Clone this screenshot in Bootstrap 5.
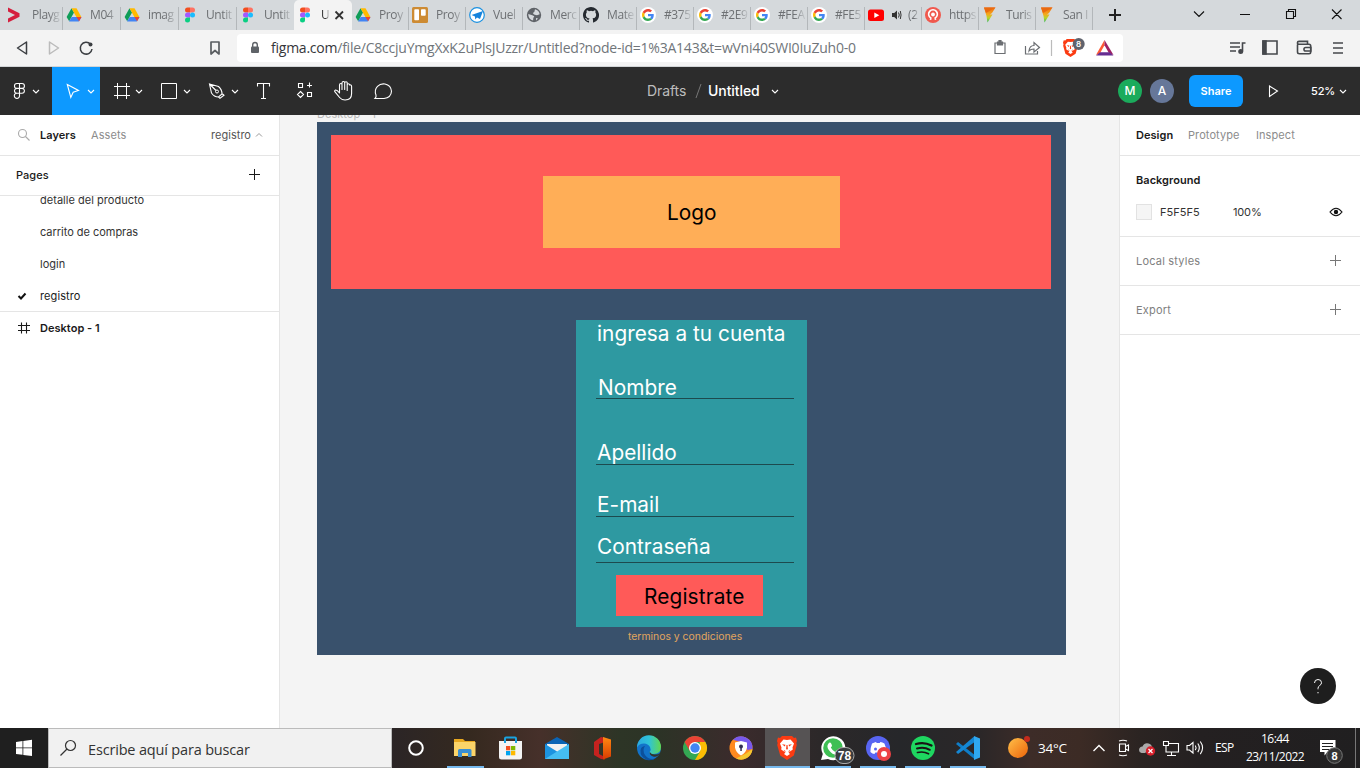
<!DOCTYPE html>
<html lang="es">
<head>
<meta charset="utf-8">
<meta name="viewport" content="width=device-width, initial-scale=1">
<title>Untitled – Figma</title>
<link href="https://cdn.jsdelivr.net/npm/bootstrap@5.3.0/dist/css/bootstrap.min.css" rel="stylesheet">
<style>
  :root { --ui: Inter, "Liberation Sans", sans-serif; --win: "Open Sans", "Noto Sans", sans-serif; }
  body { width: 1360px; height: 768px; overflow: hidden; font-family: var(--ui); font-size: 11px; line-height: 16px; letter-spacing: .03px; color: #333; background: #fff; }
  svg { display: block; flex: none; }
  .ln { fill: none; stroke: currentColor; }
  /* browser */
  .tabstrip { height: 30px; background: #d5d9dc; padding-left: 5px; font-family: var(--win); font-size: 12px; letter-spacing: -.4px; color: #6d7073; }
  .tab { width: 57px; height: 30px; padding: 0 3px; position: relative; flex: none; }
  .tab.wide { width: 58px; }
  .tab::after { content: ""; position: absolute; right: 0; top: 7px; height: 23px; width: 1px; background: #b3b7ba; }
  .tab.plain::after { display: none; }
  .tab.current { background: #f3f3f3; border-radius: 5px 5px 0 0; color: #333; }
  .tab-title { margin-left: 8px; width: 29px; white-space: nowrap; -webkit-mask-image: linear-gradient(90deg, #000 60%, rgba(0,0,0,.15)); mask-image: linear-gradient(90deg, #000 60%, rgba(0,0,0,.15)); }
  .addressbar { height: 37px; background: #f3f3f3; border-bottom: 1px solid #d2d5d7; }
  .urlbox { width: 886px; height: 28px; margin-top: 4px; background: #fff; border-radius: 4px; }
  .url { font-family: var(--win); font-size: 14px; line-height: 20px; letter-spacing: -.235px; color: #70757a; width: 709px; white-space: nowrap; }
  .url b { font-weight: 400; color: #35363a; }
  /* figma */
  .toolbar { height: 48px; background: #2c2c2c; color: #fff; }
  .tool-active { background: #0d99ff; }
  .doc { font-size: 14px; letter-spacing: -.08px; }
  .avatar { width: 24px; height: 24px; border-radius: 50%; font-size: 12px; font-weight: 500; }
  .share { width: 54px; height: 32px; border-radius: 6px; background: #0d99ff; color: #fff; font-size: 11px; font-weight: 600; padding: 0; border: 0; }
  .workspace { height: 613px; }
  .leftpanel { width: 280px; border-right: 1px solid #e5e5e5; }
  .rightpanel { width: 241px; border-left: 1px solid #e5e5e5; }
  .rule { border-bottom: 1px solid #e5e5e5; }
  .muted { color: #8c8c8c; letter-spacing: .08px; }
  .idle { color: #808080; letter-spacing: .2px; }
  .strong { font-weight: 600; color: #1a1a1a; }
  .pagelist { height: 116px; overflow: hidden; }
  .pagelist > div { height: 32px; }
  .pagelist > div:first-child { margin-top: -12px; }
  .swatch { width: 16px; height: 16px; background: #f5f5f5; border: 1px solid #e2e2e2; }
  .canvas { background: #f4f4f4; position: relative; overflow: hidden; }
  .canvas .node { position: absolute; white-space: nowrap; }
  .canvas .t { font-size: 20.8px; line-height: 25px; letter-spacing: .03px; color: #fff; }
  .help { position: absolute; left: 1300px; top: 668px; width: 36px; height: 36px; }
  /* windows taskbar */
  .taskbar { height: 40px; color: #fff; font-family: var(--win); background: linear-gradient(90deg, #222 0, #222 385px, #2b2526 392px, #35291f 470px, #46302a 540px, #2d3526 620px, #2c3326 660px, #3b2b2c 735px, #2c2829 820px, #26272a 900px, #2b2728 980px, #3d2c28 1030px, #3c2b25 1080px, #2b2422 1140px, #242021 1200px, #201f20 1360px); }
  .startbtn { background: #1f1f1f; }
  .searchbox { width: 344px; height: 40px; background: #f1f1f1; border: 1px solid #bbb; color: #333; font-size: 14.500px; letter-spacing: -.17px; }
  .clock { font-size: 12px; line-height: 18px; width: 62px; margin-right: 14px; letter-spacing: -.55px; }
</style>
</head>
<body>
<svg width="0" height="0" class="position-absolute">
  <defs>
    <linearGradient id="gf" x1="0" y1="0" x2="0" y2="1"><stop offset="0" stop-color="#f06a10"/><stop offset=".45" stop-color="#f5a81c"/><stop offset=".7" stop-color="#b9d52a"/><stop offset="1" stop-color="#25b35a"/></linearGradient>
  </defs>
  <symbol id="drive" viewBox="0 0 16 16"><path fill="#0f9d58" d="M5.5 1.2 8 5.6 3.2 14.3.6 10z"/><path fill="#ffba00" d="M5.5 1.2h5L15.4 10h-5z"/><path fill="#4285f4" d="M5.7 10h9.8l-2.7 4.5H3z"/><path fill="#ea4335" d="M10.4 10h5.1l-2.4 4.3z"/></symbol>
  <symbol id="figma" viewBox="0 0 16 16"><path fill="#f24e1e" d="M5.500 .5H8v5H5.500a2.500 2.500 0 0 1 0-5z"/><path fill="#ff7262" d="M8 .5h2.500a2.500 2.500 0 0 1 0 5H8z"/><path fill="#a259ff" d="M5.500 5.500H8v5H5.500a2.500 2.500 0 0 1 0-5z"/><circle cx="10.500" cy="8" r="2.500" fill="#1abcfe"/><path fill="#0acf83" d="M5.500 10.500H8V13a2.500 2.500 0 1 1-2.500-2.500z"/></symbol>
  <symbol id="google" viewBox="0 0 16 16"><circle cx="8" cy="8" r="8" fill="#fff"/><g transform="translate(2 2) scale(.25)"><path fill="#ea4335" d="M24 9.500c3.540 0 6.710 1.220 9.210 3.600l6.850-6.850C35.900 2.380 30.470 0 24 0 14.620 0 6.510 5.380 2.560 13.220l7.980 6.190C12.430 13.720 17.740 9.500 24 9.500z"/><path fill="#4285f4" d="M46.980 24.550c0-1.570-.15-3.090-.38-4.550H24v9.020h12.940c-.58 2.960-2.260 5.480-4.780 7.180l7.730 6c4.510-4.180 7.090-10.360 7.090-17.650z"/><path fill="#fbbc05" d="M10.530 28.590A14.500 14.500 0 0 1 9.770 24c0-1.600.27-3.140.76-4.590l-7.980-6.190A24 24 0 0 0 0 24c0 3.880.92 7.540 2.560 10.780z"/><path fill="#34a853" d="M24 48c6.480 0 11.930-2.130 15.890-5.810l-7.730-6c-2.150 1.450-4.920 2.300-8.160 2.300-6.260 0-11.570-4.220-13.470-9.910l-7.980 6.190C6.510 42.620 14.620 48 24 48z"/></g></symbol>
  <symbol id="fly" viewBox="0 0 16 16"><path fill="url(#gf)" d="M2 .5h11.500L10 6 8 7.500h2.500L5.500 15.500 4.500 9z"/><path fill="#ea6a10" d="M2 .5h11.500L4 6z"/></symbol>
  <symbol id="lion" viewBox="0 0 20 24"><path fill="#fb3b12" d="M5 0h10l2 2 2-.4 1 3.400-.7 2 .5 2-3 10.500L10 24l-6.800-4.500L.2 9l.5-2L0 5l1-3.400L3 2z"/><path fill="#fff" d="M6.500 3.500 10 4l3.500-.5 3.500 4-1.500 4 .3 2-4.300 3 1.500 1.500L10 20l-3-2 1.500-1.500-4.300-3 .3-2-1.500-4z"/><path fill="#fb3b12" d="m5 8.300 3.500.5-.7 1.700zM15 8.300l-3.500.5.7 1.700zM9.500 9h1l.4 4-.9.700-.9-.7zM6.500 13.800l2.500 1.500-1.300.5zM13.500 13.800 11 15.300l1.300.5z"/></symbol>
</svg>

<header>
  <div class="tabstrip d-flex">
    <div class="tab wide d-flex align-items-center"><svg width="16" height="16"><path d="M0 .5 11.500 6.200v3.600L0 15.500v-4L7 8 0 4.500z" fill="#d51f3e"/></svg><span class="tab-title">Playg</span></div>
    <div class="tab wide d-flex align-items-center"><svg width="16" height="16"><use href="#drive"/></svg><span class="tab-title">M04</span></div>
    <div class="tab wide d-flex align-items-center"><svg width="16" height="16"><use href="#drive"/></svg><span class="tab-title">imag</span></div>
    <div class="tab wide d-flex align-items-center"><svg width="16" height="16"><use href="#figma"/></svg><span class="tab-title">Untit</span></div>
    <div class="tab plain d-flex align-items-center"><svg width="16" height="16"><use href="#figma"/></svg><span class="tab-title">Untit</span></div>
    <div class="tab wide plain current d-flex align-items-center"><svg width="16" height="16"><use href="#figma"/></svg><span class="tab-title" style="width:8px">U</span><svg width="14" height="14" viewBox="0 0 14 14" style="margin-left:3px"><path class="ln" stroke-width="1.800" d="m3.500 3.500 7.500 7.500M11 3.500 3.500 11"/></svg></div>
    <div class="tab d-flex align-items-center"><svg width="16" height="16"><use href="#drive"/></svg><span class="tab-title">Proy</span></div>
    <div class="tab d-flex align-items-center"><svg width="16" height="16"><rect width="16" height="16" rx="1.500" fill="#cd8b33"/><rect x="2.300" y="2.300" width="4.700" height="11" rx=".8" fill="#fff"/><rect x="9" y="2.300" width="4.700" height="6.500" rx=".8" fill="#fff"/></svg><span class="tab-title">Proy</span></div>
    <div class="tab d-flex align-items-center"><svg width="16" height="16"><circle cx="8" cy="8" r="7.300" fill="#fff" stroke="#1a90e0" stroke-width="1.200"/><path fill="#1583dc" d="M2.500 8 14 4l-3 8-3-1.500-1.800 2L6 9.500z"/></svg><span class="tab-title">Vuel</span></div>
    <div class="tab d-flex align-items-center"><svg width="16" height="16"><circle cx="8" cy="8" r="7.200" fill="#5f6368"/><path fill="#d5d9dc" d="M9 2.300a6 6 0 0 1 4.700 5L11 8.200 8 7.500 6.800 6l1.500-1zM2.300 7l4 1.300 2 1-1 1.700-.2 2.500A6 6 0 0 1 2.300 7zM10 11l2 .5-2 2z"/></svg><span class="tab-title">Merc</span></div>
    <div class="tab d-flex align-items-center"><svg width="16" height="16"><path fill="#24292f" d="M8 0C3.580 0 0 3.580 0 8c0 3.540 2.290 6.530 5.470 7.590.4.070.55-.17.55-.38v-1.490c-2.010.37-2.530-.49-2.690-.94-.09-.23-.48-.94-.82-1.130-.28-.15-.68-.52-.01-.53.63-.01 1.080.58 1.230.82.72 1.210 1.870.87 2.330.66.070-.52.28-.87.510-1.070-1.780-.2-3.640-.89-3.640-3.950 0-.87.31-1.590.82-2.150-.08-.2-.36-1.020.08-2.120 0 0 .67-.21 2.200.82a7.600 7.600 0 0 1 4 0c1.530-1.040 2.200-.82 2.200-.82.44 1.100.16 1.920.08 2.120.51.56.82 1.270.82 2.150 0 3.070-1.870 3.750-3.650 3.950.29.25.54.73.54 1.480v2.200c0 .21.15.46.55.38A8 8 0 0 0 8 0z"/></svg><span class="tab-title">Mate</span></div>
    <div class="tab d-flex align-items-center"><svg width="16" height="16"><use href="#google"/></svg><span class="tab-title">#375</span></div>
    <div class="tab d-flex align-items-center"><svg width="16" height="16"><use href="#google"/></svg><span class="tab-title">#2E9</span></div>
    <div class="tab d-flex align-items-center"><svg width="16" height="16"><use href="#google"/></svg><span class="tab-title">#FEA</span></div>
    <div class="tab d-flex align-items-center"><svg width="16" height="16"><use href="#google"/></svg><span class="tab-title">#FE5</span></div>
    <div class="tab d-flex align-items-center"><svg width="16" height="16"><rect y="2.500" width="16" height="11.500" rx="2.500" fill="#f00"/><path fill="#fff" d="m6.300 5.500 5 2.700-5 2.700z"/></svg><svg width="12" height="12" style="margin-left:7px"><path fill="#333" d="M1 4h2.200L6 1.500v9L3.200 8H1z"/><path fill="none" stroke="#333" d="M7.500 3.500q1.500 2.500 0 5M9.300 2q1.500 4 0 8"/></svg><span class="tab-title" style="margin-left:5px;width:10px">(2</span></div>
    <div class="tab d-flex align-items-center"><svg width="16" height="16"><circle cx="8" cy="8" r="8" fill="#f0594e"/><path fill="none" stroke="#fff" stroke-width="1.600" d="M5.500 12.800 5.800 11a4.400 4.400 0 1 1 4.400 0l.3 1.800"/><circle cx="8" cy="7.500" r="1.900" fill="#fff"/></svg><span class="tab-title">https</span></div>
    <div class="tab d-flex align-items-center"><svg width="16" height="16"><use href="#fly"/></svg><span class="tab-title">Turis</span></div>
    <div class="tab d-flex align-items-center"><svg width="16" height="16"><use href="#fly"/></svg><span class="tab-title">San I</span></div>
    <svg width="267" height="30" viewBox="1093 0 267 30"><path fill="none" stroke="#222" stroke-width="2" d="M1109 15h12M1115 9v12"/><g fill="none" stroke="#111" stroke-width="1.100"><path d="m1194 11.500 5 5 5-5M1240 14.500h10M1286.500 11.500h7v7h-7zM1288.500 11v-1.500h7v7H1294M1332 9.500l9.500 9.500M1341.500 9.500 1332 19"/></g></svg>
  </div>
  <div class="addressbar d-flex">
    <svg width="237" height="36" viewBox="0 30 237 36"><g fill="none" stroke="#3b3e42" stroke-width="1.500" stroke-linejoin="round"><path d="m17.500 48 9-6v12z"/><path stroke="#bbb" d="m58.500 48-9-6v12z"/><path d="M90.500 44.200A5.900 5.900 0 1 0 92 49"/><path stroke="#5a5d61" stroke-width="1.700" d="M211 42h8v12l-4-3.500-4 3.500z"/></g><circle cx="90.500" cy="44.500" r="2" fill="#3b3e42"/></svg>
    <div class="urlbox d-flex align-items-center">
      <svg width="34" height="28" viewBox="237 34 34 28"><rect x="251" y="46.500" width="8" height="6.500" rx="1" fill="#5f6368"/><path fill="none" stroke="#5f6368" stroke-width="1.400" d="M252.700 47v-2.200a2.300 2.300 0 0 1 4.600 0V47"/></svg>
      <div class="url"><b>figma.com</b>/file/C8ccjuYmgXxK2uPlsJUzzr/Untitled?node-id=1%3A143&amp;t=wVni40SWI0IuZuh0-0</div>
      <svg width="143" height="28" viewBox="980 34 143 28"><g fill="none" stroke="#6b6e72" stroke-width="1.200"><path d="M995 43h10v10.500h-10z"/><path fill="#6b6e72" d="M997.500 42h5v3h-5zM999 40.500h2V42h-2z"/><path d="M1026 46.500h-.5v7.500h12v-3M1029 51q.5-5.500 5-5.500v-3l5.500 5-5.500 4.500v-3q-3.500 0-5 2z"/><path stroke="#bbb" d="M1051.500 40v16"/></g><use href="#lion" x="1063" y="39" width="15" height="18"/><circle cx="1078.700" cy="44" r="6" fill="#60636d"/><text x="1078.700" y="47" text-anchor="middle" font-size="8" font-weight="600" fill="#fff">8</text><path fill="#ff5a35" d="M1104.500 40 1096 55l4-1.700 4.500-8z"/><path fill="#9e2063" d="m1104.500 40 9 15-4.500-1.700-4.500-8z"/><path fill="#662d91" d="M1096 55.500h17.500l-4-3.200h-9.500z"/></svg>
    </div>
    <svg width="237" height="36" viewBox="1123 30 237 36"><g fill="none" stroke="#45484c" stroke-width="1.600"><path d="M1230 43h10M1230 47h10M1230 51h6M1242.500 51.500V43h3"/><circle cx="1240.700" cy="51.500" r="1.700" fill="#45484c"/><path d="M1263 41h14v13h-14z"/><path fill="#45484c" d="M1263 41h3v13h-3z"/><path d="M1297.500 44.500v7.500q0 1.700 2 1.700h9.500q1.700 0 1.700-1.700v-6q0-1.700-1.700-1.700h-10q-1.800 0-1.500-1.700 0-1.200 1.500-1.200h8.500v2.500M1311 47.500h-5.300a1.700 1.700 0 0 0 0 3.500h5.300z"/><path d="M1333 43h10M1333 48h10M1333 53h10"/></g></svg>
  </div>
</header>

<nav class="toolbar d-flex align-items-center">
  <svg width="52" height="48" viewBox="0 67 52 48"><g fill="none" stroke="#fff" stroke-width="1.100"><path d="M19.500 83.500v12.200a2.600 2.600 0 1 1-2.600-2.500h5.100a2.400 2.400 0 0 0 0-4.800h-5.100a2.400 2.400 0 0 0 0 4.800M16.900 88.400a2.450 2.450 0 0 1 0-4.900H22a2.450 2.450 0 0 1 0 4.900"/><path d="m33 90 3 3 3-3"/></g></svg>
  <svg class="tool-active" width="48" height="48" viewBox="52 67 48 48"><g fill="none" stroke="#fff" stroke-width="1.100"><path d="m67.300 84.500 11.200 6-5.300 1.800-2.400 5.200z"/><path d="m88 90 3 3 3-3"/></g></svg>
  <svg width="144" height="48" viewBox="100 67 144 48"><g fill="none" stroke="#fff"><path d="M117.500 83v16M126.500 83v16M114 86.500h16M114 95.500h16M161.500 83.500h15v15h-15z"/><path stroke-width="1.100" d="m136 90 3 3 3-3M184 90l3 3 3-3M232 90l3 3 3-3M209.500 84l9 2.500q3.500 3 3.500 7.500l-3.500 3q-4.500 0-7-4zM209.500 84l6.500 6.500M222.500 94l1.500 1.300-4 3-1.500-1.300"/><circle cx="217" cy="91.500" r="1.500"/></g></svg>
  <svg width="160" height="48" viewBox="244 67 160 48"><g fill="none" stroke="#fff" stroke-width="1.100"><path d="M257.500 86.500v-3h12v3M263.500 83.500v15M261 98.500h5M298.500 83.500h4v4h-4zM307.500 92.500h4v4h-4zM309.500 82.500v5M307 85.500h5M300.500 91.500l3 3-3 3-3-3z"/><path stroke-linejoin="round" d="M339.500 93v-8q0-1.500 1.300-1.500t1.200 1.500v4.500V83q0-1.500 1.400-1.500t1.300 1.500v6.500V83q0-1.300 1.300-1.300t1.200 1.300v7.500V85q0-1.300 1.200-1.300t1.200 1.300q2-.5 2 1.500v7q0 6.500-6.500 6.500-3.500 0-5.500-2.500l-4.800-5.800q-.5-1.200.7-1.700 1.500-.3 4 3z"/><path d="M375 98.500q1.500-1.500 1-3.500-2-5 1.500-8.700 3-3 7.500-2.300 6 1.300 6.500 7.200-.4 6.500-7.500 7.300z"/></g></svg>
  <div class="doc d-flex align-items-center" style="margin-left:243px"><span style="width:41px;color:#bdbdbd">Drafts</span><svg width="20" height="20"><path stroke="#777" d="m13 3-5 14"/></svg><span style="width:56px;font-weight:500">Untitled</span><svg width="16" height="16" class="ms-1"><path class="ln" stroke-width="1.100" d="m3 7 3 3 3-3" transform="translate(1)"/></svg></div>
  <div class="ms-auto d-flex align-items-center" style="width:242px"><span class="avatar d-flex align-items-center justify-content-center" style="background:#1bab5c">M</span><span class="avatar d-flex align-items-center justify-content-center ms-2" style="background:#667799">A</span><button class="share btn" style="margin-left:15px">Share</button><svg width="68" height="48" viewBox="1243 67 68 48"><path class="ln" stroke-width="1.100" d="m1269.500 86 8 5-8 5.500z"/></svg><span style="font-weight:500;letter-spacing:-.15px">52%</span><svg width="14" height="14" class="ms-1"><path class="ln" stroke-width="1.100" d="m1 6 3 3 3-3"/></svg></div>
</nav>

<main class="workspace d-flex">
  <aside class="leftpanel flex-shrink-0">
    <div class="rule d-flex align-items-center" style="height:41px"><svg width="40" height="40" viewBox="0 115 40 40"><g fill="none" stroke="#aaa" stroke-width="1.100"><circle cx="22.500" cy="133.500" r="4"/><path d="m25.500 136.500 4 4"/></g></svg><span class="strong" style="width:51px">Layers</span><span class="muted">Assets</span><span class="ms-auto" style="color:#555">registro</span><svg width="28" height="16"><path fill="none" stroke="#999" d="m5 9.500 3-3 3 3"/></svg></div>
    <div class="rule d-flex align-items-center justify-content-between px-3" style="height:40px;padding-bottom:1px"><span style="font-weight:500;color:#1a1a1a">Pages</span><svg width="17" height="16"><path stroke="#1a1a1a" d="M3 7.500h11M8.500 2v11"/></svg></div>
    <div class="pagelist rule">
      <div class="d-flex align-items-center" style="padding-left:40px">detalle del producto</div>
      <div class="d-flex align-items-center" style="padding-left:40px;letter-spacing:-.03px">carrito de compras</div>
      <div class="d-flex align-items-center" style="padding-left:40px">login</div>
      <div class="d-flex align-items-center" style="color:#1a1a1a;letter-spacing:.1px"><svg width="40" height="16"><path fill="none" stroke="#111" stroke-width="2" d="m18.500 8 2.500 2.500 4.500-5"/></svg>registro</div>
    </div>
    <div class="d-flex align-items-center strong" style="height:32px"><svg width="40" height="16"><path class="ln" stroke-width="1.100" d="M21.500 2.500v11M26.500 2.500v11M18 5.500h12M18 10.500h12"/></svg>Desktop - 1</div>
  </aside>
  <section class="canvas flex-grow-1">
    <div class="node" style="left:37px;top:-9px;color:#b8b8b8">Desktop - 1</div>
    <div class="node" style="left:37px;top:7px;width:749px;height:533px;background:#39516c">
      <div class="node" style="left:14px;top:13px;width:720px;height:154px;background:#ff5a58"></div>
      <div class="node" style="left:226px;top:54px;width:297px;height:72px;background:#ffae57"></div>
      <div class="node t" style="left:350px;top:78px;color:#000">Logo</div>
      <div class="node" style="left:259px;top:198px;width:231px;height:307px;background:#2e99a1"></div>
      <div class="node t" style="left:280px;top:199px">ingresa a tu cuenta</div>
      <div class="node t" style="left:281px;top:253px">Nombre</div>
      <div class="node t" style="left:280px;top:318px">Apellido</div>
      <div class="node t" style="left:280px;top:370px">E-mail</div>
      <div class="node t" style="left:280px;top:412px">Contraseña</div>
      <svg class="node" style="left:279px;top:270px" width="198" height="175"><path stroke="#1d4a4e" d="M0 6.500h198M0 72.500h198M0 124.500h198M0 170.500h198"/></svg>
      <div class="node" style="left:299px;top:453px;width:147px;height:41px;background:#ff5a58"></div>
      <div class="node t" style="left:327px;top:462px;color:#000;letter-spacing:.15px">Registrate</div>
      <div class="node" style="left:311px;top:507px;font-size:10.400px;letter-spacing:0;color:#e2a55e">terminos y condiciones</div>
    </div>
  </section>
  <aside class="rightpanel flex-shrink-0">
    <div class="rule d-flex align-items-center px-3" style="height:41px"><span class="strong" style="width:52px">Design</span><span class="muted" style="width:68px">Prototype</span><span class="muted">Inspect</span></div>
    <div class="rule px-3" style="height:81px;padding-top:16px"><div class="strong">Background</div><div class="d-flex align-items-center" style="margin-top:16px"><span class="swatch"></span><span style="margin-left:8px;width:73px">F5F5F5</span><span style="letter-spacing:-.15px">100%</span><svg width="16" height="16" class="ms-auto"><path fill="none" stroke="#111" stroke-width="1.200" d="M2 8q6-7.500 12 0-6 7.500-12 0z"/><circle cx="8" cy="8" r="2.200" fill="#111"/></svg></div></div>
    <div class="rule d-flex align-items-center justify-content-between px-3 idle" style="height:49px"><span>Local styles</span><svg width="16" height="16"><path stroke="#777" d="M2 7.500h11M7.500 2v11"/></svg></div>
    <div class="rule d-flex align-items-center justify-content-between px-3 idle" style="height:49px"><span>Export</span><svg width="16" height="16"><path stroke="#777" d="M2 7.500h11M7.500 2v11"/></svg></div>
  </aside>
</main>
<svg class="help" viewBox="0 0 36 36"><circle cx="18" cy="18" r="18" fill="#1e1e1e"/><path fill="none" stroke="#fff" d="M14.500 15q0-3.500 3.500-3.500t3.500 3.200q0 1.800-1.800 2.800-1.700 1-1.700 3v.8M18 24v1.300"/></svg>

<footer class="taskbar d-flex align-items-center">
  <svg class="startbtn" width="48" height="40" viewBox="0 728 48 40"><path fill="#fff" d="m16 742 6.500-.9v6.400H16zM23.300 741l8.700-1.200v7.700h-8.700zM16 748.300h6.500v6.500l-6.500-.9zM23.300 748.300H32v7.700l-8.700-1.100z"/></svg>
  <div class="searchbox d-flex align-items-center"><svg width="39" height="38" viewBox="49 729 39 38"><g fill="none" stroke="#333" stroke-width="1.200"><circle cx="70.500" cy="745.500" r="5"/><path d="m67 749-6.500 6.500"/></g></svg><span class="pt-1">Escribe aquí para buscar</span></div>
  <svg width="608" height="40" viewBox="392 728 608 40">
    <defs>
      <linearGradient id="e1" x1="0" x2="1"><stop stop-color="#2aa9e0"/><stop offset=".5" stop-color="#2fc3d8"/><stop offset="1" stop-color="#62d84e"/></linearGradient>
      <linearGradient id="o1" x1="0" y1="0" x2="0" y2="1"><stop stop-color="#ff8a12"/><stop offset="1" stop-color="#d83b01"/></linearGradient>
    </defs>
    <rect x="765" y="728" width="45" height="40" fill="#565354"/>
    <path fill="#76b9ed" d="M447 766h37v2h-37zM765 766h45v2h-45zM815 766h36v2h-36zM860 766h36v2h-36zM905 766h36v2h-36zM950 766h36v2h-36z"/>
    <circle cx="416" cy="748" r="6.800" fill="none" stroke="#fff" stroke-width="2"/>
    <path fill="#e8a820" d="M454 739h9l2 2h10v5h-21z"/><rect x="454" y="742" width="21.500" height="14" fill="#fbd469"/><path fill="#3a8fd2" d="M458 757v-6.500q0-1.500 1.500-1.500h10.500q1.500 0 1.500 1.500v6.500h-3.500v-4h-6v4z"/>
    <path fill="none" stroke="#1aa3e0" stroke-width="2" d="M505 743v-4.500q0-1 1-1h9q1 0 1 1v4.500"/><path fill="#f4f4f4" d="M499 741h23v16q0 2.500-2.500 2.500h-18q-2.500 0-2.500-2.500z"/><path fill="none" stroke="#1aa3e0" stroke-width="2" d="M505 743v-2.500M516 743v-2.500"/><path fill="#f25022" d="M506 746h4.300v4.300H506z"/><path fill="#7fba00" d="M511 746h4.300v4.300H511z"/><path fill="#00a4ef" d="M506 751h4.300v4.300H506z"/><path fill="#ffb900" d="M511 751h4.300v4.300H511z"/>
    <path fill="#0b64b5" d="m545 744 12-7 12 7v5h-24z"/><path fill="#f1f1f1" d="M547 744h20v8h-20z"/><path fill="#1c93e0" d="m545 744 12 7.500v7.500h-12z"/><path fill="#45bdf3" d="m569 744-12 7.500-12 7.500h24z"/>
    <path fill="#c5221f" d="m594 742 7-5 4 1v4l-6 2v10l6 3v2.500l-4-.5-7-4z"/><path fill="url(#o1)" d="m603 737 8 2.500v17l-8 3z"/>
    <circle cx="649" cy="748" r="12" fill="#1273c9"/><path fill="#0c509c" d="M645 746q-3 4 0 9 4 5.500 11 3.200a12 12 0 0 1-9 1.700q-7-3-6.500-9.500.5-4 4.500-4.400z"/><path fill="url(#e1)" d="M637 747.500a12 12 0 0 1 24-.5q0 7-7.500 7-4.500 0-4-2 2-2.500.5-5-2-3.500-6-3.500-5 0-7 4z"/><path fill="#333528" d="M649.700 751.500q1 3 5 3 3.500 0 5.500-1.500-2.500 4.500-7 3.500-4-1-3.500-5z"/>
    <circle cx="695" cy="748" r="12" fill="#34a853"/><path fill="#ea4335" d="M684.600 742A12 12 0 0 1 705.400 742H695l-5.200 9z"/><path fill="#fbbc04" d="M705.400 742A12 12 0 0 1 695 760l5.200-9-.5-9z"/><circle cx="695" cy="748" r="6" fill="#fff"/><circle cx="695" cy="748" r="4.700" fill="#4285f4"/>
    <circle cx="741" cy="748" r="11.500" fill="#ff8a20"/><path fill="#7759ed" d="M733 739.800a11.500 11.500 0 0 1 19.500 9.200l-5 1-4-7z"/><path fill="#f5c730" d="M752.500 749A11.500 11.500 0 0 1 736 758.500l10-5z"/><path fill="#fff" d="m735 742.500 6-1.500 6 1.500v5q-1 5.500-6 8-5-2.500-6-8z"/><circle cx="741" cy="746.500" r="2" fill="#332f55"/><path fill="#332f55" d="M740.300 747h1.500v4h-1.500z"/>
    <use href="#lion" x="777" y="736" width="20" height="24"/>
    <path fill="#fff" d="M821 760l1.800-6A12 12 0 1 1 828 759z"/><circle cx="833" cy="748" r="9.800" fill="#3fbf54"/><path fill="#fff" d="M828.500 743.500q1.500-2 2.700 0l.8 2q0 1-1.200 2 1.500 3 4.500 4.500 1.200-2 2-1.600l2.500 1.300q.7 3-3 3.300-4.500-.2-8-5-2.600-3.800-.3-6.500z"/><rect x="835" y="747.500" width="19" height="16" rx="8" fill="#3a3d3f" stroke="#aaa"/><text x="844.500" y="759.500" text-anchor="middle" font-family="Liberation Sans" font-weight="700" font-size="12" fill="#fff">78</text>
    <circle cx="878" cy="748" r="12" fill="#5865f2"/><path fill="#fff" d="M872 743.500q3-1.500 4-1.500l.7 1h3l.7-1q2 .2 4 1.500 2 4 2 8.500-2 2-4 2l-1-1.500h-6l-1 1.500q-2 0-4-2 0-4.500 1.600-8.500z"/><circle cx="875.500" cy="749" r="1.500" fill="#5865f2"/><circle cx="884" cy="754" r="7" fill="#ed4245"/><circle cx="884" cy="754" r="3" fill="#fff"/>
    <circle cx="923" cy="748" r="12" fill="#1ed760"/><g fill="none" stroke="#191414" stroke-linecap="round"><path stroke-width="2.300" d="M916 744q8-2.500 15.500 1.500"/><path stroke-width="2" d="M917 748.500q7-2 12.800 1.300"/><path stroke-width="1.700" d="M917.500 752.500q6-1.500 11 1.300"/></g>
    <path fill="#0f7dc7" d="m956 744 2-2 18 14-1 3.500z"/><path fill="#1487d4" d="m956 752 2 2 18-13-2-4.500z"/><path fill="#2fa8f0" d="m974 736 6 2.500v19l-6 2.500z"/>
  </svg>
  <svg width="38" height="40" viewBox="1000 728 38 40"><defs><linearGradient id="su" x1="0" y1="0" x2="1" y2="1"><stop stop-color="#ffc04a"/><stop offset="1" stop-color="#ec6309"/></linearGradient></defs><circle cx="1018" cy="748" r="10" fill="url(#su)"/><circle cx="1027" cy="739" r="3" fill="#c42b1c"/></svg>
  <span style="width:49px;font-size:13.500px;letter-spacing:-.2px">34°C</span>
  <svg width="128" height="40" viewBox="1087 728 128 40"><g fill="none" stroke="#fff" stroke-width="1.100"><path stroke-width="1.400" d="m1093.500 751 5.500-5.500 5.500 5.500"/><path d="M1119.500 744h6v7.500h-6zM1125.500 746.500l3-1.500v5.500l-3-1.500M1119 741q4-1.500 8 0M1119 755q4 1.500 8 0"/><path d="M1168 743.500h10.500v8.500h-12.500v-4M1171.500 752v3M1167 755.500h9M1163.500 741.500h5v4h-5zM1166 745.500v4"/><path d="M1187 745.500h2.500l3.500-3v10.500l-3.500-3h-2.500zM1195.300 745.500q1.500 2.300 0 4.600M1197.800 743.500q3 4.300 0 8.600M1200.300 741.500q4.500 6.300 0 12.600"/></g><path fill="#aaa" d="M1139 750q.3-3.500 3.500-3.500 2-4 6-3 3 .5 3.500 3.500l-7 6h-3.500q-2.500-.5-2.500-3z"/><circle cx="1150.500" cy="751" r="4.700" fill="#d71f2b"/><path stroke="#fff" stroke-width="1.200" d="m1148.500 749 4 4M1152.500 749l-4 4"/></svg>
  <span style="width:29px;font-size:12px;letter-spacing:-.6px">ESP</span>
  <div class="clock text-center"><div>16:44</div><div>23/11/2022</div></div>
  <svg width="40" height="40" viewBox="1320 728 40 40"><path fill="#fff" d="M1320 740h15.500v12h-8l-3 3.500v-3.500h-4.500z"/><path stroke="#222" d="M1322 743.500h11M1322 746.500h11M1322 749.500h7"/><circle cx="1334.500" cy="755.500" r="7.800" fill="#343434" stroke="#777"/><text x="1334.500" y="759.500" text-anchor="middle" font-family="Liberation Sans" font-weight="700" font-size="11" fill="#fff">8</text><path stroke="#777" d="M1355.500 728v40"/></svg>
</footer>
<script src="https://cdn.jsdelivr.net/npm/bootstrap@5.3.0/dist/js/bootstrap.bundle.min.js"></script>
</body>
</html>
